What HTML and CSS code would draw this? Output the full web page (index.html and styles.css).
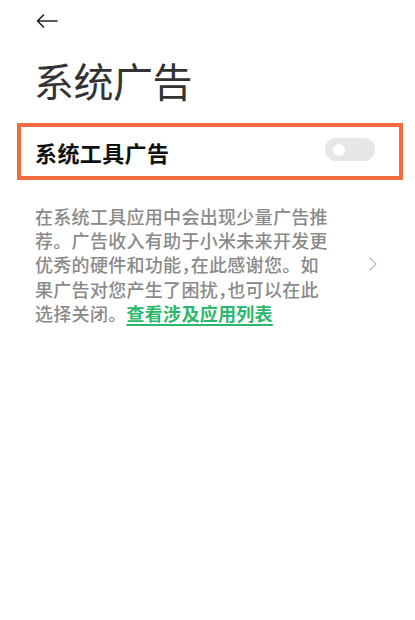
FILE: index.html
```html
<!DOCTYPE html>
<html lang="zh-CN">
<head>
<meta charset="utf-8">
<title>系统广告</title>
<link rel="stylesheet" href="styles.css">
</head>
<body>
<div class="page">
  <div class="topbar">
    <svg class="back" width="22" height="14" viewBox="0 0 22 14" aria-hidden="true">
      <path d="M21 7H1.5M7.5 1L1.5 7l6 6" fill="none" stroke="#222" stroke-width="1.6" stroke-linecap="round" stroke-linejoin="round"/>
    </svg>
  </div>
  <h1 class="title">系统广告</h1>
  <div class="setting">
    <span class="label">系统工具广告</span>
    <span class="toggle"><span class="knob"></span></span>
  </div>
  <div class="desc">
    <p class="text">在系统工具应用中会出现少量广告推<br>荐。广告收入有助于小米未来开发更<br>优秀的硬件和功能<span class="comma">，</span>在此感谢您。如<br>果广告对您产生了困扰<span class="comma">，</span>也可以在此<br>选择关闭。<a class="link" href="#">查看涉及应用列表</a></p>
    <svg class="chev" width="8" height="14" viewBox="0 0 8 14" aria-hidden="true">
      <path d="M1 1l6 6-6 6" fill="none" stroke="#b8b8b8" stroke-width="1.3" stroke-linecap="round" stroke-linejoin="round"/>
    </svg>
  </div>
</div>
</body>
</html>
```

FILE: styles.css
```css
html, body {
  margin: 0;
  padding: 0;
  background: #ffffff;
}

body {
  font-family: "Noto Sans CJK SC", "Noto Sans", sans-serif;
  width: 415px;
  height: 620px;
  overflow: hidden;
}

.page {
  display: flex;
  flex-direction: column;
}

.topbar {
  display: flex;
  align-items: center;
  height: 14px;
  padding: 14px 0 0 36px;
}

.back {
  display: block;
}

.title {
  margin: 32px 0 0 34px;
  font-size: 40px;
  line-height: 40px;
  font-weight: 400;
  color: #333333;
  letter-spacing: -0.5px;
}

.setting {
  margin: 23px 0 0 17px;
  height: 49px;
  border: 4px solid #f26d3d;
  display: flex;
  align-items: center;
  justify-content: space-between;
  padding: 0 24px 0 14px;
  box-sizing: content-box;
  width: 340px;
}

.label {
  font-size: 22px;
  line-height: 22px;
  font-weight: 700;
  color: #111111;
  letter-spacing: 0.4px;
  margin-top: 1px;
}

.toggle {
  position: relative;
  width: 50px;
  height: 23px;
  border-radius: 12px;
  background: #e6e6e6;
  margin-bottom: 4px;
}

.knob {
  position: absolute;
  left: 8px;
  top: 5.5px;
  width: 12px;
  height: 12px;
  border-radius: 50%;
  background: #ffffff;
}

.desc {
  margin: 24px 0 0 35px;
  width: 342px;
  display: flex;
  align-items: center;
  justify-content: space-between;
}

.text {
  margin: 0;
  font-size: 18px;
  line-height: 24.2px;
  letter-spacing: 0.3px;
  font-weight: 500;
  color: #8a8a8a;
  white-space: nowrap;
}

.comma {
  font-feature-settings: "halt";
}

.link {
  color: #2cb86c;
  font-weight: 700;
  text-decoration: underline;
  text-decoration-thickness: 2px;
  text-underline-offset: 3px;
}

.chev {
  display: block;
  margin-top: -2px;
}
```
